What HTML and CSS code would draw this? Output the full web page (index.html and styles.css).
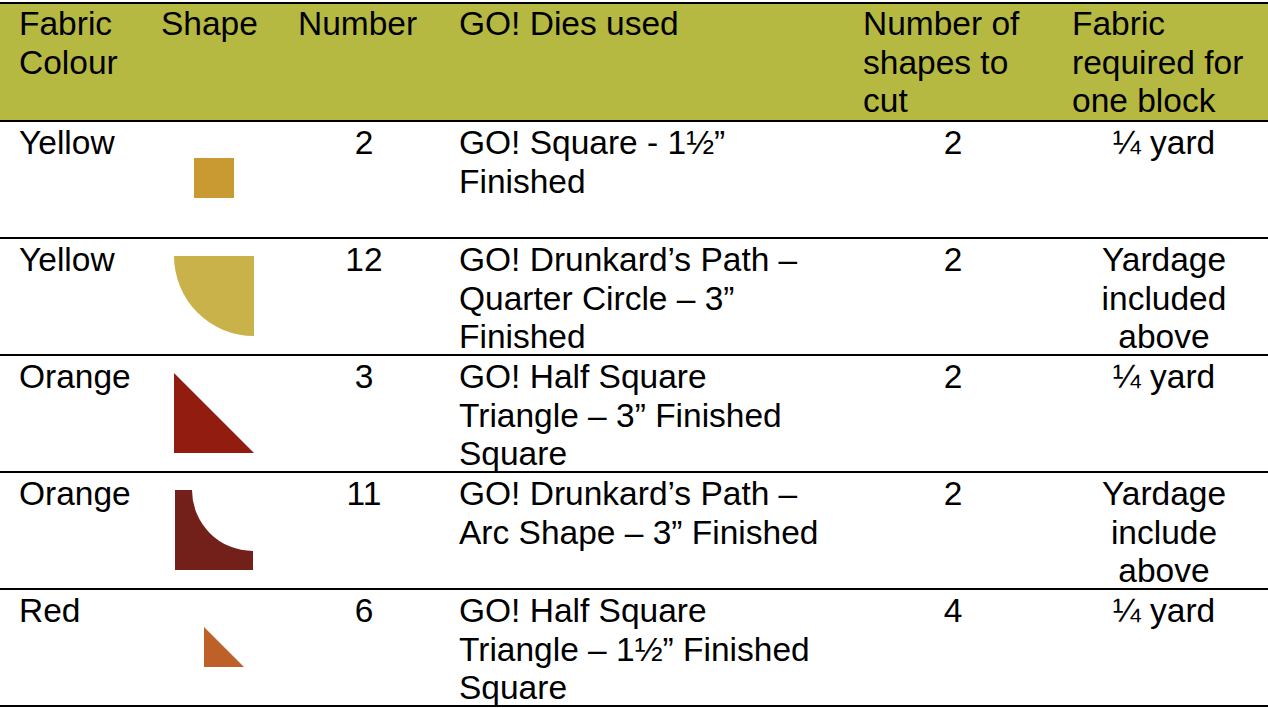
FILE: index.html
```html
<!DOCTYPE html>
<html lang="en">
<head>
<meta charset="utf-8">
<title>GO! Dies cutting chart</title>
<link rel="stylesheet" href="styles.css">
</head>
<body>
<div class="sheet" role="table">
  <div class="row head" role="row">
    <div class="cell" role="columnheader">Fabric Colour</div>
    <div class="cell" role="columnheader">Shape</div>
    <div class="cell" role="columnheader">Number</div>
    <div class="cell" role="columnheader">GO! Dies used</div>
    <div class="cell" role="columnheader">Number of shapes to cut</div>
    <div class="cell" role="columnheader">Fabric required for one block</div>
  </div>

  <div class="row" role="row">
    <div class="cell">Yellow</div>
    <div class="cell shape">
      <svg width="40" height="40" viewBox="0 0 40 40"><rect width="40" height="40" fill="#c89a31"/></svg>
    </div>
    <div class="cell center">2</div>
    <div class="cell">GO! Square - 1½” Finished</div>
    <div class="cell center">2</div>
    <div class="cell center">¼ yard</div>
  </div>

  <div class="row" role="row">
    <div class="cell">Yellow</div>
    <div class="cell shape">
      <svg width="80" height="80" viewBox="0 0 80 80"><path d="M0 0 H80 V80 A80 80 0 0 1 0 0 Z" fill="#cab24b"/></svg>
    </div>
    <div class="cell center">12</div>
    <div class="cell">GO! Drunkard’s Path – Quarter Circle – 3” Finished</div>
    <div class="cell center">2</div>
    <div class="cell center">Yardage included above</div>
  </div>

  <div class="row" role="row">
    <div class="cell">Orange</div>
    <div class="cell shape">
      <svg width="80" height="80" viewBox="0 0 80 80"><path d="M0 0 L80 80 H0 Z" fill="#931c11"/></svg>
    </div>
    <div class="cell center">3</div>
    <div class="cell">GO! Half Square Triangle – 3” Finished Square</div>
    <div class="cell center">2</div>
    <div class="cell center">¼ yard</div>
  </div>

  <div class="row" role="row">
    <div class="cell">Orange</div>
    <div class="cell shape">
      <svg width="78" height="80" viewBox="0 0 78 80"><path d="M0 0 H17 A61 61 0 0 0 78 61 V80 H0 Z" fill="#73201b"/></svg>
    </div>
    <div class="cell center">11</div>
    <div class="cell">GO! Drunkard’s Path – Arc Shape – 3” Finished</div>
    <div class="cell center">2</div>
    <div class="cell center">Yardage include above</div>
  </div>

  <div class="row" role="row">
    <div class="cell">Red</div>
    <div class="cell shape">
      <svg class="offset" width="40" height="40" viewBox="0 0 40 40"><path d="M0 0 L40 40 H0 Z" fill="#be6129"/></svg>
    </div>
    <div class="cell center">6</div>
    <div class="cell">GO! Half Square Triangle – 1½” Finished Square</div>
    <div class="cell center">4</div>
    <div class="cell center">¼ yard</div>
  </div>
</div>
</body>
</html>
```
FILE: styles.css
```css
* {
  box-sizing: border-box;
}

body {
  margin: 0;
  background: #ffffff;
  color: #000000;
  font-family: "Liberation Sans", Arial, sans-serif;
  font-size: 33.5px;
  line-height: 38.5px;
}

.sheet {
  margin-top: 2px;
  width: 1268px;
  border-top: 2px solid #000000;
}

.row {
  display: grid;
  grid-template-columns: 144px 137px 161px 404px 209px 213px;
  height: 117px;
  border-bottom: 2px solid #000000;
}

.head {
  height: 118px;
  background: #b6b941;
}

.cell {
  padding: 2px 12px 0 17px;
}

.cell:first-child {
  padding-left: 19px;
}

.head .cell {
  padding-top: 1px;
}

.center {
  text-align: center;
}

.shape {
  display: flex;
  align-items: center;
  justify-content: center;
  padding: 0 12px 4px 15px;
}

.shape svg {
  display: block;
}

.shape .offset {
  margin-left: 20px;
}
```
